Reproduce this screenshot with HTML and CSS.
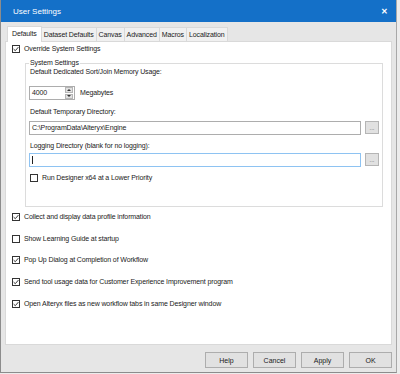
FILE: index.html
```html
<!DOCTYPE html>
<html lang="en">
  <head>
    <meta charset="UTF-8" />
    <title>User Settings</title>
    <link rel="stylesheet" href="styles.css">
  </head>
  <body>
    <div class="window">
      <div class="titlebar">
        <span class="title">User Settings</span>
        <span class="close">&#x2715;</span>
      </div>
      <div class="client">
        <div class="tabs">
          <span class="tab active">Defaults</span>
          <span class="tab">Dataset Defaults</span>
          <span class="tab">Canvas</span>
          <span class="tab">Advanced</span>
          <span class="tab">Macros</span>
          <span class="tab">Localization</span>
        </div>
        <div class="panel">
          <label class="check top">
            <span class="box checked"></span>Override System Settings
          </label>

          <fieldset class="group">
            <legend>System Settings</legend>
            <div class="field-label first">Default Dedicated Sort/Join Memory Usage:</div>
            <div class="spin-row">
              <div class="spin">
                <span class="spin-value">4000</span>
                <span class="spin-arrows">
                  <span class="arrow up"></span>
                  <span class="arrow down"></span>
                </span>
              </div>
              <span>Megabytes</span>
            </div>

            <div class="field-label">Default Temporary Directory:</div>
            <div class="path-row temp">
              <div class="textbox">C:\ProgramData\Alteryx\Engine</div>
              <button class="browse">...</button>
            </div>

            <div class="field-label">Logging Directory (blank for no logging):</div>
            <div class="path-row log">
              <div class="textbox focused"><span class="caret"></span></div>
              <button class="browse">...</button>
            </div>

            <label class="check inner">
              <span class="box"></span>Run Designer x64 at a Lower Priority
            </label>
          </fieldset>

          <div class="options">
            <label class="check"><span class="box checked"></span>Collect and display data profile information</label>
            <label class="check"><span class="box"></span>Show Learning Guide at startup</label>
            <label class="check"><span class="box checked"></span>Pop Up Dialog at Completion of Workflow</label>
            <label class="check"><span class="box checked"></span>Send tool usage data for Customer Experience Improvement program</label>
            <label class="check"><span class="box checked"></span>Open Alteryx files as new workflow tabs in same Designer window</label>
          </div>
        </div>
        <div class="buttons">
          <button class="btn">Help</button>
          <button class="btn">Cancel</button>
          <button class="btn">Apply</button>
          <button class="btn">OK</button>
        </div>
      </div>
    </div>
  </body>
</html>
```

FILE: styles.css
```css
*,
*::before,
*::after {
  box-sizing: border-box;
  padding: 0;
  margin: 0;
}
body {
  width: 400px;
  height: 374px;
  background: #ececec;
  font-family: "Liberation Sans", Arial, sans-serif;
  font-size: 7px;
  letter-spacing: -0.12px;
  line-height: 10px;
  color: #1a1a1a;
  overflow: hidden;
}
.window {
  width: 397px;
  height: 373px;
  display: flex;
  flex-direction: column;
  background: #e6e6e6;
  border-left: 1px solid #8c8c8c;
  border-right: 1px solid #a8a8a8;
  border-bottom: 1px solid #8c8c8c;
}
.titlebar {
  height: 22px;
  flex: none;
  display: flex;
  align-items: center;
  justify-content: space-between;
  padding: 1px 8px 0 12px;
  background: #1470c8;
  color: #fff;
  font-size: 8px;
  letter-spacing: 0;
}
.close {
  font-size: 8px;
  font-weight: bold;
}
.client {
  flex: 1;
  display: flex;
  flex-direction: column;
  padding: 3px 2px 0 4px;
}
.tabs {
  display: flex;
  align-items: flex-end;
  height: 16px;
  padding-left: 3px;
}
.tab {
  height: 14px;
  padding: 0 2px;
  display: flex;
  align-items: center;
  background: #f0f0f0;
  border: 1px solid #d9d9d9;
  border-bottom: none;
  margin-left: -1px;
}
.tab.active {
  height: 16px;
  background: #fff;
  position: relative;
  z-index: 1;
  margin-bottom: -1px;
  padding: 0 4px 1px;
}
.panel {
  height: 304px;
  background: #fff;
  border: 1px solid #d9d9d9;
  margin-right: 2px;
  padding: 2px 0 0 6px;
}
.check {
  display: flex;
  align-items: center;
  gap: 4px;
  height: 10px;
}
.box {
  width: 8px;
  height: 8px;
  border: 1px solid #333;
  background: #fff;
  flex: none;
}
.box.checked {
  background: #fff url("data:image/svg+xml,%3Csvg xmlns='http://www.w3.org/2000/svg' viewBox='0 0 6 6'%3E%3Cpath d='M0.6 3.1 L2.3 4.7 L5.4 1.1' fill='none' stroke='%23222' stroke-width='0.9'/%3E%3C/svg%3E") center / 6px 6px no-repeat;
}
.group {
  margin: 4px 8px 0 13px;
  border: 1px solid #dcdcdc;
  padding: 0 0 23px 3px;
}
.group legend {
  padding: 0 1px;
  line-height: 10px;
}
.field-label {
  padding-left: 1px;
  height: 10px;
}
.field-label.first {
  margin-top: -1px;
}
.spin-row {
  display: flex;
  align-items: center;
  gap: 5px;
  margin: 9px 0 7px;
}
.spin {
  width: 46px;
  height: 14px;
  border: 1px solid #adadad;
  display: flex;
  justify-content: space-between;
  align-items: center;
  padding: 0 1px 0 2px;
}
.spin-arrows {
  width: 8px;
  height: 12px;
  display: flex;
  flex-direction: column;
  gap: 1px;
}
.arrow {
  flex: 1;
  background: #e1e1e1;
  border: 1px solid #b5b5b5;
  display: flex;
  align-items: center;
  justify-content: center;
}
.arrow::after {
  content: "";
  border-left: 2px solid transparent;
  border-right: 2px solid transparent;
}
.up::after {
  border-bottom: 2px solid #333;
}
.down::after {
  border-top: 2px solid #333;
}
.path-row {
  display: flex;
  align-items: flex-start;
  gap: 4px;
}
.path-row.temp {
  margin: 4px 0 6px;
}
.path-row.log {
  margin: 2px 0 6px;
}
.textbox {
  width: 332px;
  height: 14px;
  border: 1px solid #adadad;
  padding: 0 2px;
  display: flex;
  align-items: center;
}
.textbox.focused {
  border-color: #8ec3f2;
}
.caret {
  width: 1px;
  height: 8px;
  background: #222;
}
.browse {
  width: 14px;
  height: 13px;
  background: #e1e1e1;
  border: 1px solid #b5b5b5;
  font-family: inherit;
  font-size: 6px;
  line-height: 8px;
  color: #555;
}
.inner {
  margin-left: 1px;
}
.options {
  margin-top: 5px;
  display: flex;
  flex-direction: column;
  gap: 11.7px;
}
.buttons {
  display: flex;
  justify-content: flex-end;
  gap: 5px;
  padding: 7px 2px 0 0;
}
.btn {
  width: 43px;
  height: 16px;
  background: #e1e1e1;
  border: 1px solid #adadad;
  font-family: inherit;
  font-size: 7px;
  color: #1a1a1a;
}
```
